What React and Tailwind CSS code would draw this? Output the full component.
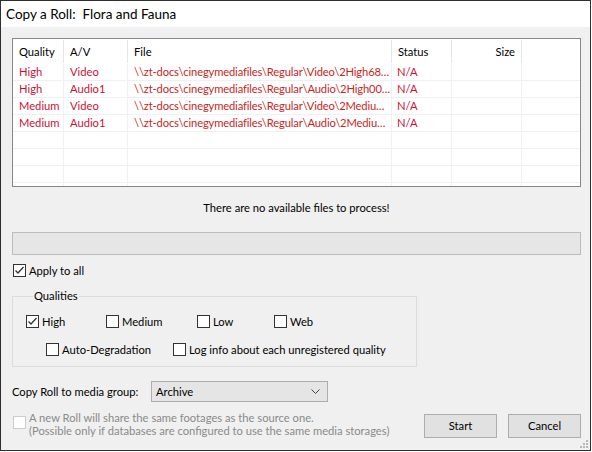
import React from 'react';

const red = 'text-[#cc0f38]';

const rows = [
  { q: 'High', av: 'Video', file: '\\\\zt-docs\\cinegymediafiles\\Regular\\Video\\2High68…' },
  { q: 'High', av: 'Audio1', file: '\\\\zt-docs\\cinegymediafiles\\Regular\\Audio\\2High00…' },
  { q: 'Medium', av: 'Video', file: '\\\\zt-docs\\cinegymediafiles\\Regular\\Video\\2Mediu…' },
  { q: 'Medium', av: 'Audio1', file: '\\\\zt-docs\\cinegymediafiles\\Regular\\Audio\\2Mediu…' },
  null, null, null, null,
];

const cols = 'grid grid-cols-[51px_64px_264px_60px_70px_1fr]';

const CheckBox = ({ checked, disabled }) => (
  <span
    className={`w-[13px] h-[13px] shrink-0 flex items-center justify-center border bg-white ${
      disabled ? 'border-[#cccccc]' : 'border-[#333333]'
    }`}
  >
    {checked && (
      <svg width="11" height="11" viewBox="0 0 11 11">
        <polyline points="1.5,5.5 4,8 9.5,2" fill="none" stroke="#333" strokeWidth="1.3" />
      </svg>
    )}
  </span>
);

const Check = ({ label, checked, className = '' }) => (
  <label className={`flex items-center gap-[3px] ${className}`}>
    <CheckBox checked={checked} />
    <span>{label}</span>
  </label>
);

const App = () => {
  return (
    <div className="w-[591px] h-[451px] border border-[#2f2f2f] bg-[#f0f0f0] flex flex-col relative text-[11.2px] leading-[16px] text-black font-['Lato','Liberation_Sans',sans-serif]">
      <div className="h-[26px] shrink-0 bg-white flex items-center pl-[5px] text-[13.5px]">
        Copy a Roll:&nbsp; Flora and Fauna
      </div>

      <div className="flex flex-col pl-[11px] pr-[9px]">
        {/* file list */}
        <div className="mt-[11px] h-[149px] border border-[#828790] bg-white overflow-hidden">
          <div className={`${cols} h-[25px]`}>
            {['Quality', 'A/V', 'File', 'Status', 'Size', ''].map((h, i) => (
              <div
                key={i}
                className={`flex items-center px-[6px] my-[1px] ${i < 5 ? 'border-r border-[#e5e5e5]' : ''} ${
                  i === 4 ? 'justify-end' : ''
                }`}
              >
                {h}
              </div>
            ))}
          </div>
          {rows.map((r, i) => (
            <div key={i} className={`${cols} h-[17px] border-b border-[#f0f0f0]`}>
              <div className={`px-[6px] border-r border-[#f0f0f0] ${red}`}>{r ? r.q : ''}</div>
              <div className={`px-[6px] border-r border-[#f0f0f0] ${red}`}>{r ? r.av : ''}</div>
              <div className="pl-[6px] pr-[1px] border-r border-[#f0f0f0] whitespace-nowrap overflow-hidden tracking-[-0.15px] text-[#c8261c]">
                {r ? r.file : ''}
              </div>
              <div className={`px-[5px] border-r border-[#f0f0f0] ${red}`}>{r ? 'N/A' : ''}</div>
              <div className="border-r border-[#f0f0f0]"></div>
              <div></div>
            </div>
          ))}
        </div>

        <div className="mt-[13px] text-center">There are no available files to process!</div>

        <div className="mt-[16px] h-[23px] border border-[#bcbcbc] bg-[#e6e6e6]"></div>

        <div className="mt-[9px] h-[13px] flex items-center">
          <Check label="Apply to all" checked className="ml-[1px]" />
        </div>

        <fieldset className="mt-[11px] w-[405px] h-[79px] border border-[#dcdcdc] pl-[13px]">
          <legend className="ml-[7px] px-[1px] leading-[16px]">Qualities</legend>
          <div className="flex items-center h-[13px] mt-[11px]">
            <Check label="High" checked className="w-[80px]" />
            <Check label="Medium" className="w-[91px]" />
            <Check label="Low" className="w-[77px]" />
            <Check label="Web" />
          </div>
          <div className="flex items-center h-[13px] mt-[15px] pl-[20px]">
            <Check label="Auto-Degradation" className="w-[127px]" />
            <Check label="Log info about each unregistered quality" />
          </div>
        </fieldset>

        <div className="mt-[14px] flex items-center h-[21px]">
          <span className="w-[139px]">Copy Roll to media group:</span>
          <div className="w-[177px] h-[21px] border border-[#adadad] bg-[#e5e5e5] flex items-center justify-between pl-[4px] pr-[7px]">
            <span>Archive</span>
            <svg width="9" height="6" viewBox="0 0 9 6">
              <polyline points="0.5,0.5 4.5,4.5 8.5,0.5" fill="none" stroke="#444" strokeWidth="1" />
            </svg>
          </div>
        </div>

        <div className="mt-[9px] flex items-start">
          <div className="flex items-start gap-[3px] pl-[1px] text-[#8a8a8a] leading-[13px]">
            <span className="mt-[5px]">
              <CheckBox disabled />
            </span>
            <div>
              <div>A new Roll will share the same footages as the source one.</div>
              <div>(Possible only if databases are configured to use the same media storages)</div>
            </div>
          </div>
          <div className="ml-auto mt-[3px] flex gap-[11px]">
            <button className="w-[73px] h-[24px] border border-[#adadad] bg-[#e1e1e1]">Start</button>
            <button className="w-[73px] h-[24px] border border-[#adadad] bg-[#e1e1e1]">Cancel</button>
          </div>
        </div>
      </div>

      <svg className="absolute right-[2px] bottom-[2px]" width="10" height="10" viewBox="0 0 10 10">
        {[
          [8, 2],
          [5, 5],
          [8, 5],
          [2, 8],
          [5, 8],
          [8, 8],
        ].map(([x, y], i) => (
          <rect key={i} x={x} y={y} width="2" height="2" fill="#b8b8b8" />
        ))}
      </svg>
    </div>
  );
};

export default App;
